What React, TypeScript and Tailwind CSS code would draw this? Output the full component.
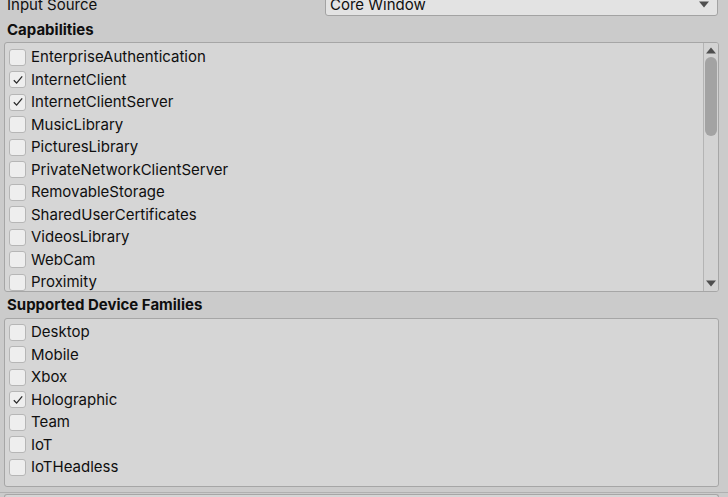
import React from "react";

const capabilities = [
  { name: "EnterpriseAuthentication", checked: false },
  { name: "InternetClient", checked: true },
  { name: "InternetClientServer", checked: true },
  { name: "MusicLibrary", checked: false },
  { name: "PicturesLibrary", checked: false },
  { name: "PrivateNetworkClientServer", checked: false },
  { name: "RemovableStorage", checked: false },
  { name: "SharedUserCertificates", checked: false },
  { name: "VideosLibrary", checked: false },
  { name: "WebCam", checked: false },
  { name: "Proximity", checked: false },
  { name: "Microphone", checked: false },
  { name: "Location", checked: false },
];

const devices = [
  { name: "Desktop", checked: false },
  { name: "Mobile", checked: false },
  { name: "Xbox", checked: false },
  { name: "Holographic", checked: true },
  { name: "Team", checked: false },
  { name: "IoT", checked: false },
  { name: "IoTHeadless", checked: false },
];

const Check = ({ checked }: { checked: boolean }) => (
  <div className="flex size-[17px] shrink-0 items-center justify-center rounded-[3px] border border-[#b6b6b6] bg-[#eeeeee]">
    {checked && (
      <svg width="12" height="12" viewBox="0 0 12 12">
        <path d="M1.8 6.3 L4.6 9.1 L10.2 2.4" fill="none" stroke="#2a2a2a" strokeWidth="1.3" />
      </svg>
    )}
  </div>
);

const Row = ({ name, checked }: { name: string; checked: boolean }) => (
  <div className="flex h-[22.5px] shrink-0 items-center gap-[5px] pl-[4px]">
    <Check checked={checked} />
    <span className="text-[15px] leading-[18px] text-[#0f0f0f]">{name}</span>
  </div>
);

const Arrow = ({ up }: { up?: boolean }) => (
  <svg width="10" height="7" viewBox="0 0 10 7">
    <path d={up ? "M0 6.5 L5 0.5 L10 6.5 Z" : "M0 0.5 L10 0.5 L5 6.5 Z"} fill="#4f4f4f" />
  </svg>
);

export default function App() {
  return (
    <div
      className="flex h-[497px] w-[728px] flex-col overflow-hidden bg-[#cbcbcb]"
      style={{ fontFamily: "Inter, 'Noto Sans', sans-serif" }}
    >
      {/* input source row, cut at the top */}
      <div className="-mt-[7px] flex h-[23px] shrink-0 items-center pl-[7px] pr-[10px]">
        <span className="w-[318px] text-[15px] leading-[18px] text-[#0f0f0f]">Input Source</span>
        <div className="flex h-[22px] flex-1 items-center justify-between rounded-[3px] border border-[#a3a3a3] bg-[#e3e3e3] pl-[4px] pr-[8px]">
          <span className="text-[15px] leading-[18px] text-[#0f0f0f]">Core Window</span>
          <Arrow />
        </div>
      </div>

      <div className="flex h-[26px] shrink-0 items-center pl-[7px] pt-[2px] text-[15px] font-bold leading-[18px] text-[#0f0f0f]">
        Capabilities
      </div>

      <div className="mx-[4px] mr-[9px] flex h-[250px] shrink-0 overflow-hidden rounded-[3px] border border-[#a6a6a6] bg-[#d6d6d6]">
        <div className="flex flex-1 flex-col overflow-hidden pt-[3px]">
          {capabilities.map((c) => (
            <Row key={c.name} {...c} />
          ))}
        </div>
        <div className="flex w-[15px] shrink-0 flex-col items-center border-l border-[#b4b4b4] bg-[#d3d3d3] py-[4px]">
          <Arrow up />
          <div className="mt-[3px] h-[79px] w-[12px] rounded-[6px] bg-[#a3a3a3]" />
          <div className="flex-1" />
          <Arrow />
        </div>
      </div>

      <div className="flex h-[26px] shrink-0 items-center pl-[7px] text-[15px] font-bold leading-[18px] text-[#0f0f0f]">
        Supported Device Families
      </div>

      <div className="mx-[4px] mr-[9px] flex h-[169px] shrink-0 flex-col rounded-[3px] border border-[#a6a6a6] bg-[#d6d6d6] pt-[2px]">
        {devices.map((d) => (
          <Row key={d.name} {...d} />
        ))}
      </div>

      <div className="mt-[5px] h-px shrink-0 bg-[#b0b0b0]" />
      <div className="mx-[4px] mr-[9px] mt-[1px] flex-1 rounded-t-[3px] border border-b-0 border-[#a6a6a6] bg-[#d6d6d6]" />
    </div>
  );
}
